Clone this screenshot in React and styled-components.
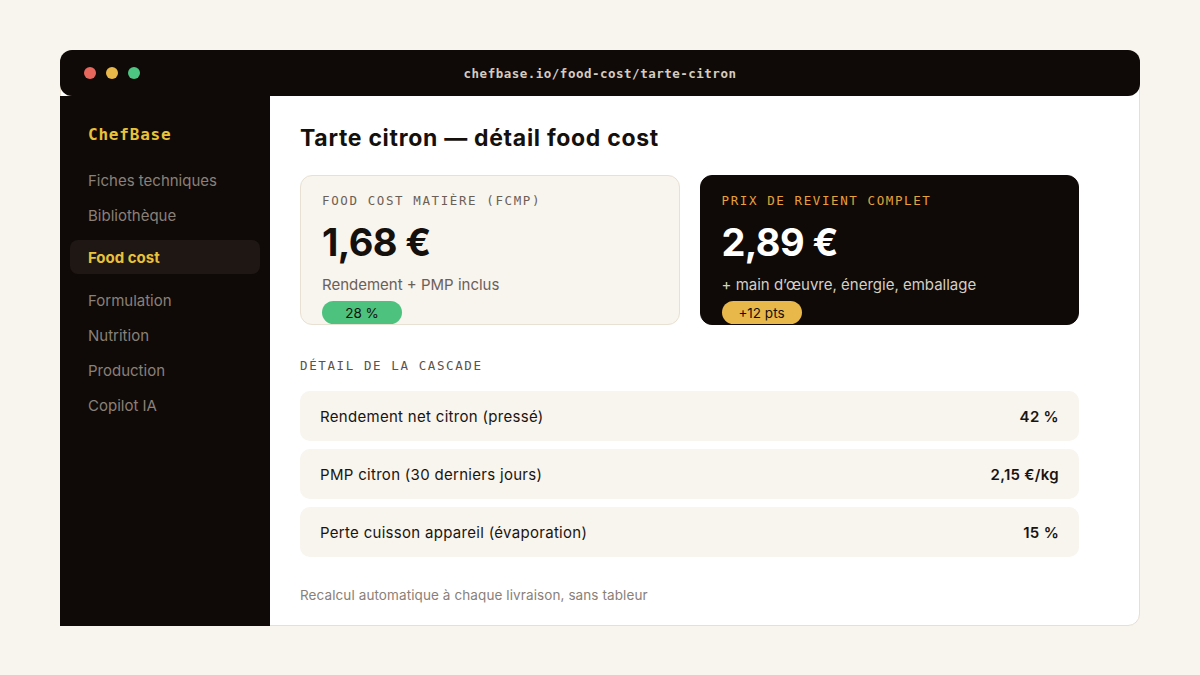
import React from 'react';
import styled, { createGlobalStyle } from 'styled-components';

const GlobalStyle = createGlobalStyle`
  html, body {
    margin: 0;
    padding: 0;
    background: #f8f4ee;
  }
  body {
    font-family: Inter, "Noto Sans", sans-serif;
    color: #15100c;
  }
`;

const Page = styled.div`
  width: 1200px;
  height: 675px;
  padding: 50px 60px 0;
  box-sizing: border-box;
`;

const Frame = styled.div`
  height: 576px;
  background: #fff;
  border: 1px solid #e6dfd2;
  border-radius: 12px;
  display: flex;
  flex-direction: column;
  box-sizing: border-box;
`;

const TitleBar = styled.div`
  height: 46px;
  margin: -1px -1px 0;
  background: #0f0a07;
  border-radius: 12px;
  display: flex;
  align-items: center;
  padding: 0 24px;
  position: relative;
`;

const Dot = styled.span`
  width: 12px;
  height: 12px;
  border-radius: 50%;
  background: ${(p) => p.$color};
  margin-right: 10px;
`;

const Url = styled.div`
  position: absolute;
  left: 0;
  right: 0;
  text-align: center;
  font-family: "DejaVu Sans Mono", "Liberation Mono", monospace;
  font-size: 12.5px;
  font-weight: bold;
  letter-spacing: 0.5px;
  color: #d4ccc0;
`;

const Body = styled.div`
  flex: 1;
  display: flex;
  min-height: 0;
`;

const Sidebar = styled.nav`
  width: 210px;
  margin: 0 0 -1px -1px;
  background: #0f0a07;
  padding: 29px 10px 0;
  box-sizing: border-box;
  display: flex;
  flex-direction: column;
`;

const Brand = styled.div`
  font-family: "DejaVu Sans Mono", "Liberation Mono", monospace;
  font-weight: bold;
  font-size: 16px;
  color: #e8c23a;
  padding: 0 18px;
  margin-bottom: 19px;
  letter-spacing: 0.8px;
`;

const NavItem = styled.div`
  font-size: 15px;
  padding: 0 18px;
  height: ${(p) => (p.$active ? '34px' : '35px')};
  display: flex;
  align-items: center;
  border-radius: 8px;
  color: ${(p) => (p.$active ? '#e8c23a' : '#8a8078')};
  font-weight: ${(p) => (p.$active ? 700 : 400)};
  background: ${(p) => (p.$active ? '#1e1713' : 'transparent')};
  margin: ${(p) => (p.$active ? '7px 0 9px' : '0')};
`;

const Main = styled.main`
  flex: 1;
  padding: 28px 60px 0 30px;
  display: flex;
  flex-direction: column;
`;

const Title = styled.h1`
  margin: 0 0 23px;
  font-size: 23px;
  font-weight: 700;
  letter-spacing: 0.7px;
  color: #15100c;
`;

const Cards = styled.div`
  display: grid;
  grid-template-columns: 1fr 1fr;
  gap: 20px;
`;

const Card = styled.div`
  height: 150px;
  box-sizing: border-box;
  border-radius: 12px;
  padding: 17px 21px 0;
  background: ${(p) => (p.$dark ? '#0f0a07' : '#f8f4ee')};
  border: 1px solid ${(p) => (p.$dark ? '#0f0a07' : '#e8e0d2')};
  display: flex;
  flex-direction: column;
  align-items: flex-start;
`;

const Label = styled.div`
  font-family: "DejaVu Sans Mono", "Liberation Mono", monospace;
  font-size: 12.5px;
  letter-spacing: 1.6px;
  color: ${(p) => (p.$color || '#6b5f55')};
  text-transform: uppercase;
`;

const Value = styled.div`
  font-size: 38px;
  font-weight: 700;
  letter-spacing: -0.6px;
  margin-top: 11px;
  color: ${(p) => (p.$light ? '#ffffff' : '#15100c')};
`;

const Sub = styled.div`
  font-size: 15px;
  margin-top: 10px;
  color: ${(p) => (p.$light ? '#d6cfc4' : '#6b6058')};
`;

const Badge = styled.span`
  margin-top: 7px;
  height: 26px;
  min-width: 80px;
  box-sizing: border-box;
  padding: 0 14px;
  border-radius: 13px;
  display: inline-flex;
  align-items: center;
  justify-content: center;
  font-size: 13.5px;
  color: #15100c;
  background: ${(p) => p.$bg};
`;

const SectionLabel = styled(Label)`
  margin: 33px 0 18px;
  color: #5c524a;
`;

const Rows = styled.div`
  display: flex;
  flex-direction: column;
  gap: 8px;
`;

const Row = styled.div`
  height: 50px;
  border-radius: 10px;
  background: #f8f4ee;
  display: flex;
  align-items: center;
  justify-content: space-between;
  padding: 0 20px;
  font-size: 15px;
  letter-spacing: 0.3px;
  color: #1a1410;
`;

const RowValue = styled.span`
  font-weight: 600;
`;

const Footnote = styled.div`
  margin-top: 30px;
  font-size: 13.5px;
  letter-spacing: 0.1px;
  color: #8a8078;
`;

const nav = ['Fiches techniques', 'Bibliothèque', 'Food cost', 'Formulation', 'Nutrition', 'Production', 'Copilot IA'];

const rows = [
  { label: 'Rendement net citron (pressé)', value: '42 %' },
  { label: 'PMP citron (30 derniers jours)', value: '2,15 €/kg' },
  { label: 'Perte cuisson appareil (évaporation)', value: '15 %' },
];

export default function App() {
  return (
    <>
      <GlobalStyle />
      <Page>
        <Frame>
          <TitleBar>
            <Dot $color="#e8675d" />
            <Dot $color="#e8b84a" />
            <Dot $color="#4cc681" />
            <Url>chefbase.io/food-cost/tarte-citron</Url>
          </TitleBar>
          <Body>
            <Sidebar>
              <Brand>ChefBase</Brand>
              {nav.map((item) => (
                <NavItem key={item} $active={item === 'Food cost'}>
                  {item}
                </NavItem>
              ))}
            </Sidebar>
            <Main>
              <Title>Tarte citron — détail food cost</Title>
              <Cards>
                <Card>
                  <Label>Food cost matière (FCMP)</Label>
                  <Value>1,68 €</Value>
                  <Sub>Rendement + PMP inclus</Sub>
                  <Badge $bg="#4cc27e">28 %</Badge>
                </Card>
                <Card $dark>
                  <Label $color="#e8a23a">Prix de revient complet</Label>
                  <Value $light>2,89 €</Value>
                  <Sub $light>+ main d’œuvre, énergie, emballage</Sub>
                  <Badge $bg="#e8b84a">+12 pts</Badge>
                </Card>
              </Cards>
              <SectionLabel>Détail de la cascade</SectionLabel>
              <Rows>
                {rows.map((r) => (
                  <Row key={r.label}>
                    <span>{r.label}</span>
                    <RowValue>{r.value}</RowValue>
                  </Row>
                ))}
              </Rows>
              <Footnote>Recalcul automatique à chaque livraison, sans tableur</Footnote>
            </Main>
          </Body>
        </Frame>
      </Page>
    </>
  );
}
